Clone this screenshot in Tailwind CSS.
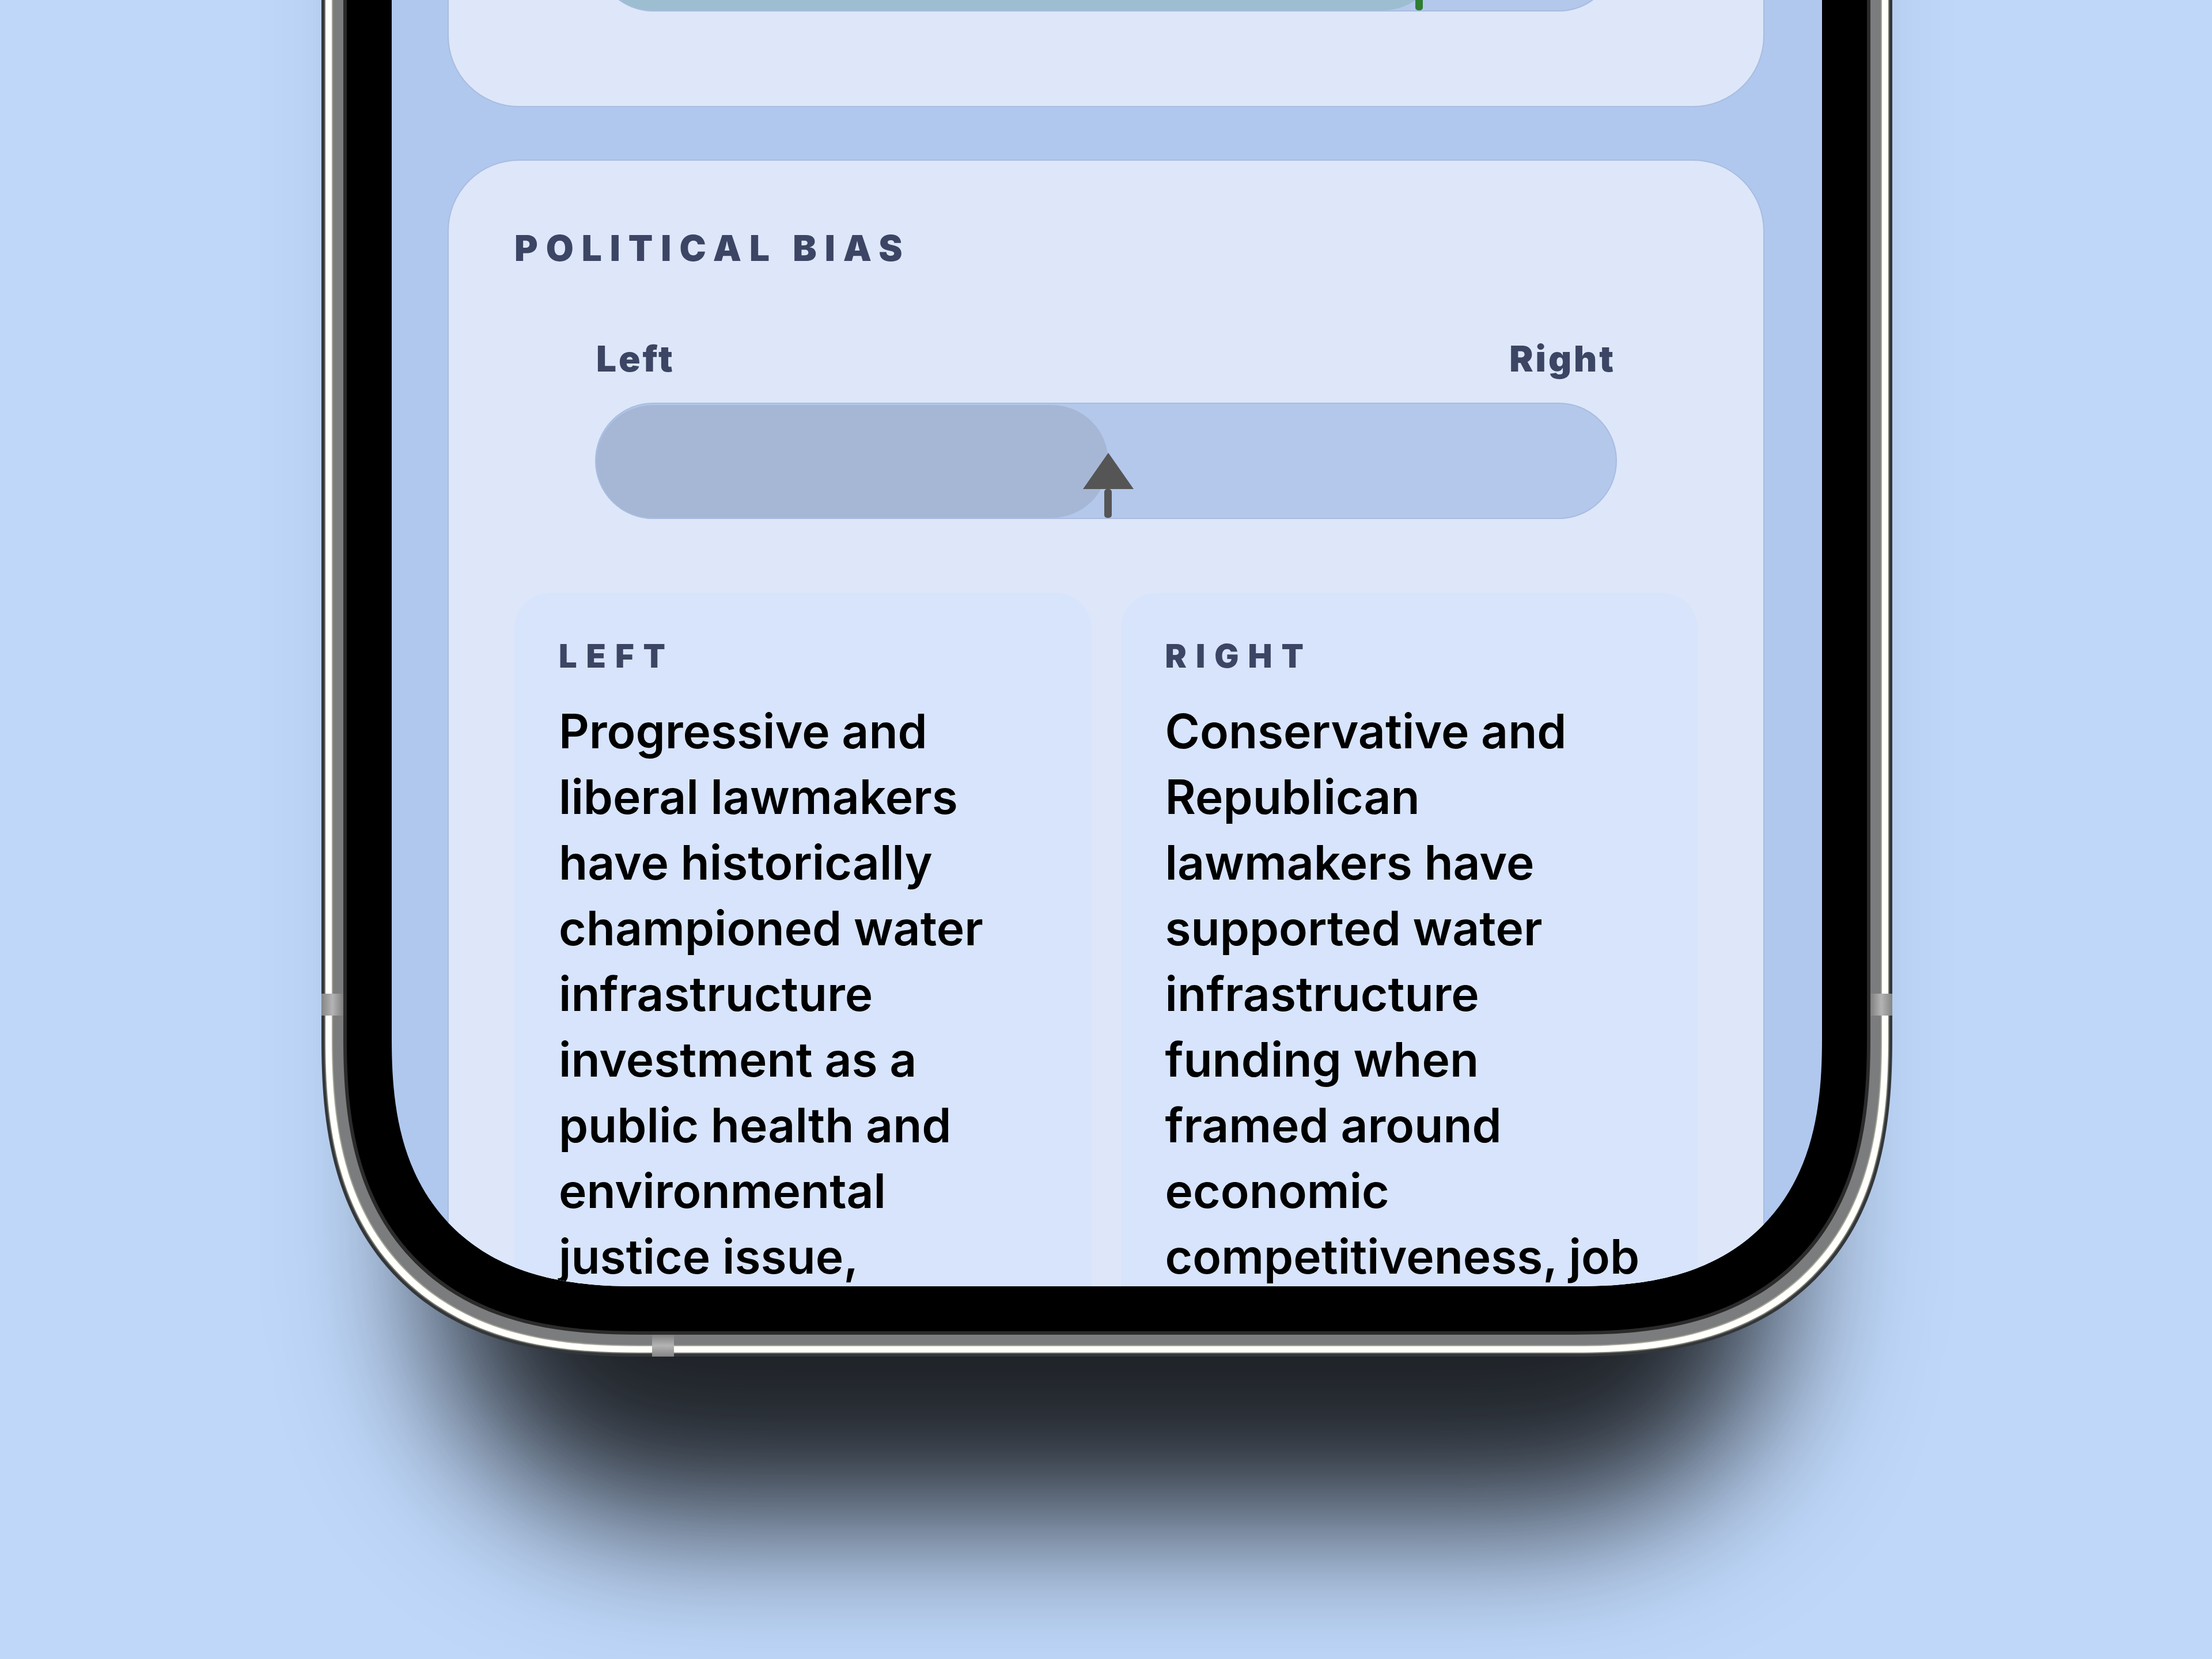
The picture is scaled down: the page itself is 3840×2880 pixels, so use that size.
<!DOCTYPE html>
<html lang="en">
<head>
    <meta charset="UTF-8">
    <meta name="viewport" content="width=device-width, initial-scale=1.0">
    <title>Political Bias</title>
    <script src="https://cdn.jsdelivr.net/npm/@tailwindcss/browser@4"></script>
</head>
<body class="h-screen overflow-hidden bg-[#bfd8fa] pr-[14.45%] pl-[14.53%] font-['Inter',sans-serif]">
    <!-- Phone: metal frame, bezel, screen -->
    <div class="relative -mt-[1200px] rounded-b-[600px] shadow-[0_480px_360px_-200px_rgba(0,0,0,0.84)]">
        <div class="rounded-b-[552px] bg-[#33373a] px-[5px] pb-[5px] [corner-shape:superellipse(1.32)]">
        <div class="rounded-b-[547px] bg-[#77776f] px-[2px] pb-[2px] [corner-shape:superellipse(1.32)]">
        <div class="rounded-b-[545px] bg-[#fffffb] px-[11px] pb-[11px] [corner-shape:superellipse(1.32)]">
        <div class="rounded-b-[534px] bg-[#a3a398] px-[2px] pb-[2px] [corner-shape:superellipse(1.32)]">
        <div class="rounded-b-[532px] bg-[#7b7c7d] px-[18px] pb-[18px] [corner-shape:superellipse(1.32)]">
        <div class="rounded-b-[514px] bg-[#2b2b2b] px-[6px] pb-[6px] [corner-shape:superellipse(1.32)]">
        <div class="rounded-b-[508px] bg-black px-[78px] pb-[78px] [corner-shape:superellipse(1.32)]">
            <main class="h-[3433px] overflow-hidden rounded-b-[430px] bg-[#b0c8ee] pr-[100px] pl-[97px] [corner-shape:superellipse(1.32)]">
                <section class="rounded-b-[124px] border-2 border-[#a9bce0] bg-[#dde7f9] px-[254px] pt-[1016px] pb-[164px]">
                    <div class="relative h-[202px] rounded-full border-2 border-[#a9bce0] bg-[#b4c8ec] pt-[2px]">
                        <div class="h-full rounded-full bg-[#9dbdd0]" style="width: 82.7%"></div>
                        <div class="absolute bottom-0 flex -translate-x-1/2 flex-col items-center" style="left: 80.7%">
                            <svg class="h-[63px] w-[88px]" viewBox="0 0 88 63"><path d="M44 0L88 63H0Z" fill="#2e7d32"/></svg>
                            <div class="h-[50px] w-[13px] rounded-[5px] bg-[#2e7d32]"></div>
                        </div>
                    </div>
                </section>

                <section class="mt-[91px] rounded-t-[124px] border-2 border-[#a9bce0] bg-[#dde7f9] px-[114px] pt-[114px]">
                    <h2 class="text-[62px]/[76px] font-black tracking-[14px] text-[#3c4563]">POLITICAL BIAS</h2>
                    <div class="mt-[116px] px-[140px]">
                        <div class="flex justify-between px-[2px] text-[62px]/[76px] font-black tracking-[4px] text-[#3c4563]">
                            <span>Left</span>
                            <span>Right</span>
                        </div>
                        <div class="relative mt-[38px] h-[202px] rounded-full border-2 border-[#a9bce0] bg-[#b4c8ec] pt-[2px]">
                            <div class="h-full rounded-full bg-[#a6b7d6]" style="width: 50.2%"></div>
                            <div class="absolute bottom-0 flex -translate-x-1/2 flex-col items-center" style="left: 50.2%">
                                <svg class="h-[63px] w-[88px]" viewBox="0 0 88 63"><path d="M44 0L88 63H0Z" fill="#555"/></svg>
                                <div class="h-[50px] w-[13px] rounded-[5px] bg-[#555]"></div>
                            </div>
                        </div>
                    </div>
                    <div class="mt-[128px] grid grid-cols-2 gap-[51px]">
                        <article class="rounded-t-[62px] bg-[#d7e4fb] pt-[76px] pr-[84px] pl-[77px]">
                            <h3 class="text-[56px]/[68px] font-black tracking-[16px] text-[#3c4563]">LEFT</h3>
                            <p class="mt-[40px] text-[82px]/[114px] font-semibold text-black">Progressive and liberal lawmakers have historically championed water infrastructure investment as a public health and environmental justice issue,</p>
                        </article>
                        <article class="rounded-t-[62px] bg-[#d7e4fb] pt-[76px] pr-[84px] pl-[77px]">
                            <h3 class="text-[56px]/[68px] font-black tracking-[16px] text-[#3c4563]">RIGHT</h3>
                            <p class="mt-[40px] text-[82px]/[114px] font-semibold text-black">Conservative and Republican lawmakers have supported water infrastructure funding when framed around economic competitiveness, job</p>
                        </article>
                    </div>
                </section>
            </main>
        </div>
        </div>
        </div>
        </div>
        </div>
        </div>
        </div>
        <!-- Antenna bands -->
        <div class="absolute bottom-[592px] left-0 h-[38px] w-[38px] bg-linear-to-r from-[#858585] via-[#b4b4b4] to-[#808080]"></div>
        <div class="absolute right-0 bottom-[592px] h-[38px] w-[38px] bg-linear-to-l from-[#858585] via-[#b4b4b4] to-[#808080]"></div>
        <div class="absolute bottom-0 left-[574px] h-[38px] w-[38px] bg-linear-to-t from-[#858585] via-[#b4b4b4] to-[#808080]"></div>
    </div>
</body>
</html>
